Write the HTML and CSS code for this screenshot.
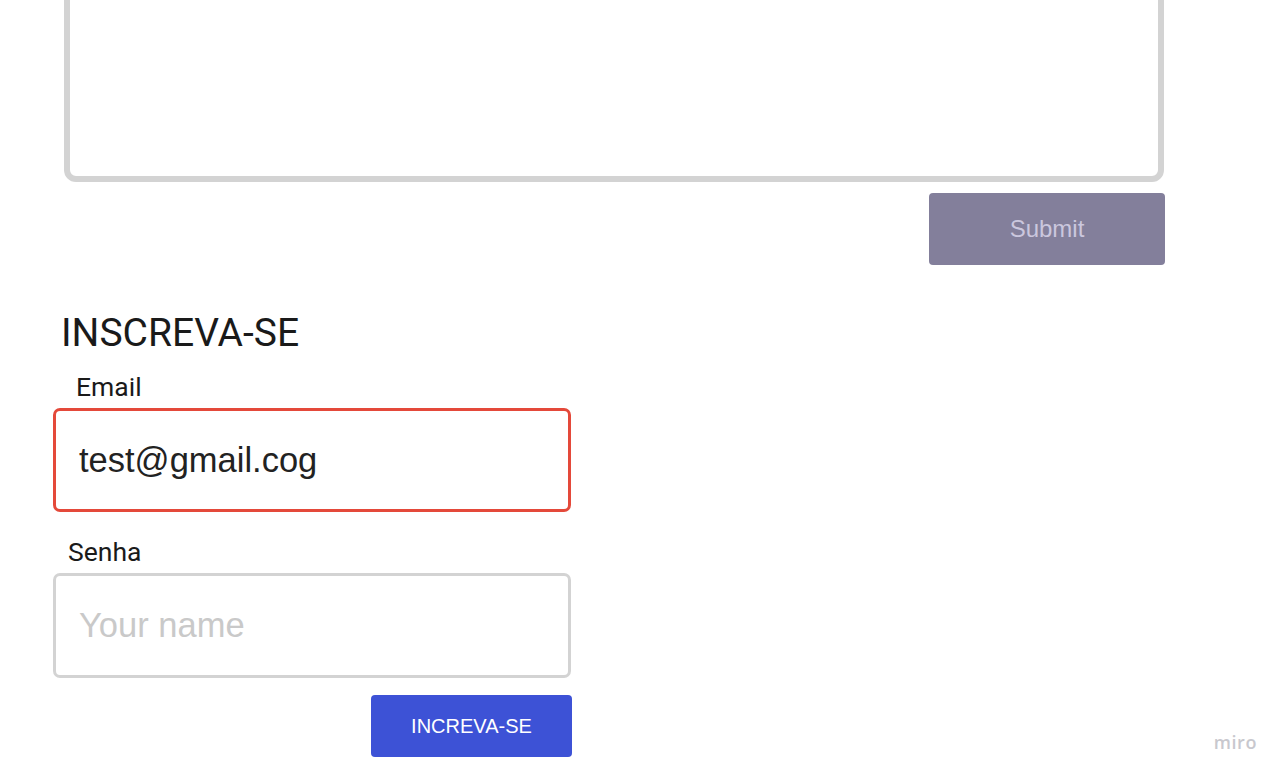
FILE: index.html
```html
<!DOCTYPE html>
<html lang="pt">
<head>
<meta charset="utf-8">
<title>Inscreva-se</title>
<link rel="stylesheet" href="styles.css">
</head>
<body>
<main class="page">
  <section class="feedback">
    <div class="textarea"></div>
    <div class="actions">
      <button class="submit" type="button">Submit</button>
    </div>
  </section>

  <section class="subscribe">
    <h2 class="title">INSCREVA-SE</h2>
    <label class="label label-email">Email</label>
    <div class="input input-error">test@gmail.cog</div>
    <label class="label label-senha">Senha</label>
    <div class="input input-empty">Your name</div>
    <div class="subscribe-actions">
      <button class="primary" type="button">INCREVA-SE</button>
    </div>
  </section>
</main>
<div class="watermark">miro</div>
</body>
</html>
```

FILE: styles.css
```css
html, body {
  margin: 0;
  padding: 0;
  background: #ffffff;
  overflow: hidden;
}
body {
  width: 1286px;
  height: 777px;
  position: relative;
  font-family: "Liberation Sans", Arial, sans-serif;
}
.page {
  display: flex;
  flex-direction: column;
}
.feedback {
  margin: -60px 0 0 64px;
  width: 1101px;
  display: flex;
  flex-direction: column;
}
.textarea {
  box-sizing: border-box;
  width: 1100px;
  height: 242px;
  border: 6px solid #d3d3d3;
  border-radius: 12px;
  background: #fff;
}
.actions {
  display: flex;
  justify-content: flex-end;
  margin-top: 11px;
}
.submit {
  width: 236px;
  height: 72px;
  border: none;
  border-radius: 4px;
  background: #837f9b;
  color: #cbc7de;
  font-family: "Liberation Sans", Arial, sans-serif;
  font-size: 24px;
  padding: 0;
}
.subscribe {
  display: flex;
  flex-direction: column;
  margin-left: 53px;
  width: 519px;
  margin-top: 45px;
}
.title {
  margin: 0 0 0 8px;
  font-family: Roboto, sans-serif;
  font-weight: 400;
  font-size: 39px;
  line-height: 46px;
  color: #1a1a1a;
}
.label {
  font-family: Roboto, sans-serif;
  font-size: 26.5px;
  line-height: 30px;
  color: #1a1a1a;
}
.label-email {
  margin: 16px 0 0 23px;
}
.label-senha {
  margin: 25px 0 0 15px;
}
.input {
  box-sizing: border-box;
  width: 518px;
  height: 104px;
  margin-top: 6px;
  border: 3px solid #d3d3d3;
  border-radius: 7px;
  padding: 0 0 0 23px;
  display: flex;
  align-items: center;
  font-family: "Liberation Sans", Arial, sans-serif;
  font-size: 34.5px;
  color: #222;
}
.input-error {
  border-color: #e4493a;
}
.input-empty {
  height: 105px;
  margin-top: 6px;
  color: #c9c9c9;
}
.subscribe-actions {
  display: flex;
  justify-content: flex-end;
  margin-top: 17px;
}
.primary {
  width: 201px;
  height: 62px;
  border: none;
  border-radius: 4px;
  background: #3d52d6;
  color: #ffffff;
  font-family: "Liberation Sans", Arial, sans-serif;
  font-size: 20px;
  padding: 0;
}
.watermark {
  position: absolute;
  right: 29px;
  bottom: 25px;
  font-family: "Open Sans", sans-serif;
  font-weight: 600;
  font-size: 18px;
  letter-spacing: 0.6px;
  color: #c8c8ce;
  line-height: 20px;
}
```
